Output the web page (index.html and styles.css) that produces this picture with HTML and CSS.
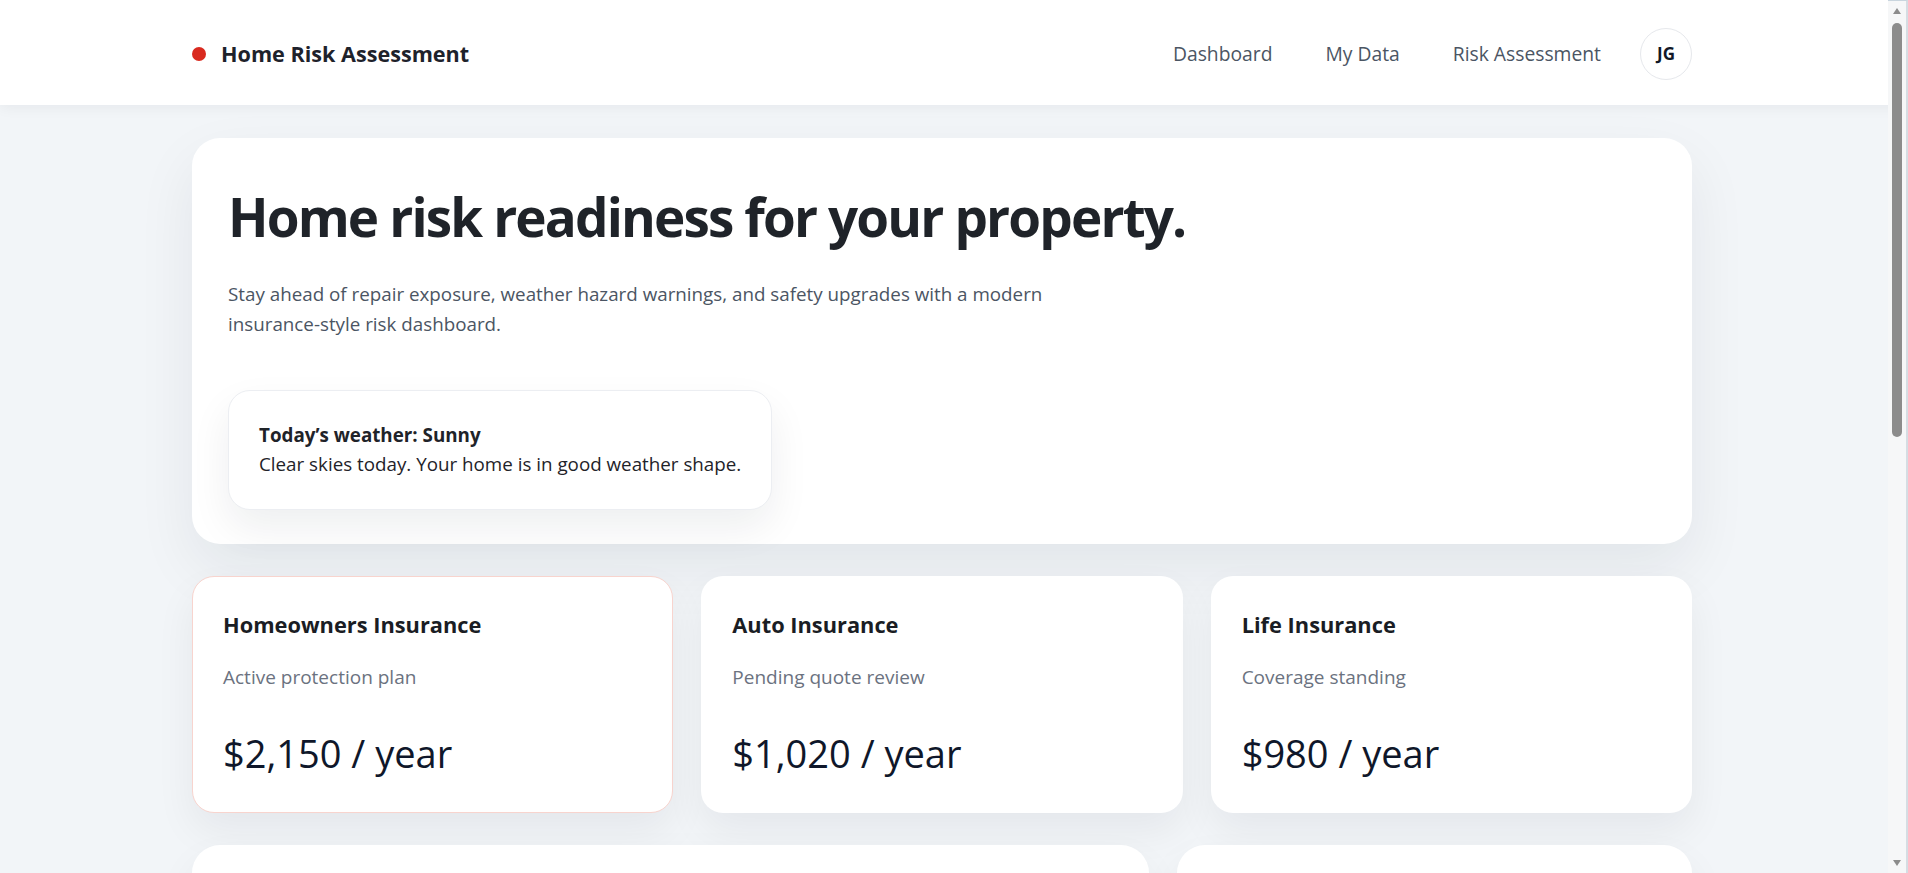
FILE: index.html
```html
<!DOCTYPE html>
<html lang="en">
<head>
<meta charset="utf-8">
<title>Home Risk Assessment</title>
<link rel="stylesheet" href="styles.css">
</head>
<body>
<header class="topbar">
  <div class="topbar-inner">
    <div class="brand"><span class="brand-dot"></span><span class="brand-name">Home Risk Assessment</span></div>
    <nav class="nav">
      <a class="nav-link" href="#">Dashboard</a>
      <a class="nav-link" href="#">My Data</a>
      <a class="nav-link" href="#">Risk Assessment</a>
      <span class="avatar">JG</span>
    </nav>
  </div>
</header>
<div class="page-wrap">
<main class="page">
  <section class="hero">
    <h1 class="hero-title">Home risk readiness for your property.</h1>
    <p class="hero-text">Stay ahead of repair exposure, weather hazard warnings, and safety upgrades with a modern insurance-style risk dashboard.</p>
    <div class="weather">
      <div class="weather-title">Today’s weather: Sunny</div>
      <div class="weather-text">Clear skies today. Your home is in good weather shape.</div>
    </div>
  </section>
  <section class="policies">
    <article class="policy policy-active">
      <h2 class="policy-title">Homeowners Insurance</h2>
      <p class="policy-status">Active protection plan</p>
      <p class="policy-price">$2,150 / year</p>
    </article>
    <article class="policy">
      <h2 class="policy-title">Auto Insurance</h2>
      <p class="policy-status">Pending quote review</p>
      <p class="policy-price">$1,020 / year</p>
    </article>
    <article class="policy">
      <h2 class="policy-title">Life Insurance</h2>
      <p class="policy-status">Coverage standing</p>
      <p class="policy-price">$980 / year</p>
    </article>
  </section>
  <section class="details">
    <article class="panel"></article>
    <article class="panel"></article>
  </section>
</main>
</div>
<div class="scrollbar" aria-hidden="true">
  <span class="scroll-arrow scroll-up"></span>
  <span class="scroll-thumb"></span>
  <span class="scroll-arrow scroll-down"></span>
</div>
</body>
</html>
```

FILE: styles.css
```css
* { box-sizing: border-box; }

body {
  margin: 0;
  background: #f2f5f8;
  font-family: "Open Sans", "Noto Sans", sans-serif;
  color: #1f2329;
}

.topbar {
  background: #ffffff;
  height: 105px;
  padding-right: 24px;
  box-shadow: 0 2px 14px rgba(15, 23, 42, 0.06);
}

.topbar-inner {
  max-width: 1500px;
  height: 100%;
  margin: 0 auto;
  display: flex;
  align-items: center;
  justify-content: space-between;
}

.brand {
  display: flex;
  align-items: center;
  gap: 15px;
  padding-top: 2px;
}

.brand-dot {
  width: 14px;
  height: 14px;
  border-radius: 50%;
  background: #d92a1f;
}

.brand-name {
  font-size: 21.6px;
  font-weight: 700;
  color: #1e222b;
}

.nav {
  display: flex;
  align-items: center;
  gap: 25px;
  padding-top: 2px;
}

.nav-link {
  padding: 0 14px;
  font-size: 19.3px;
  color: #4b5563;
  text-decoration: none;
}

.avatar {
  width: 52px;
  height: 52px;
  border: 1px solid #e6e8ec;
  border-radius: 50%;
  display: flex;
  align-items: center;
  justify-content: center;
  font-size: 17px;
  font-weight: 700;
  color: #111827;
}

.page-wrap {
  padding-right: 24px;
}

.page {
  max-width: 1500px;
  margin: 33px auto 40px;
  display: flex;
  flex-direction: column;
  gap: 32px;
}

.hero {
  background: #ffffff;
  border-radius: 28px;
  padding: 50px 36px 34px;
  box-shadow: 0 24px 60px rgba(15, 23, 42, 0.07);
}

.hero-title {
  margin: 0;
  font-size: 53px;
  line-height: 1.1;
  font-weight: 700;
  letter-spacing: -0.035em;
  color: #1f2329;
}

.hero-text {
  margin: 33px 0 0;
  max-width: 880px;
  font-size: 18.8px;
  line-height: 30px;
  color: #4b5563;
}

.weather {
  width: fit-content;
  margin-top: 51px;
  padding: 30px;
  border: 1px solid #eceef2;
  border-radius: 22px;
  background: #ffffff;
  box-shadow: 0 18px 40px rgba(15, 23, 42, 0.07);
  font-size: 18.8px;
  line-height: 29px;
  color: #1f2329;
}

.weather-title {
  font-weight: 700;
}

.policies {
  display: grid;
  grid-template-columns: repeat(3, 1fr);
  gap: 28px;
}

.policy {
  background: #ffffff;
  border: 1px solid transparent;
  border-radius: 22px;
  padding: 34px 30px 37px;
  box-shadow: 0 18px 40px rgba(15, 23, 42, 0.06);
}

.policy-active {
  border-color: #f8d4ce;
}

.policy-title {
  margin: 0;
  font-size: 21.8px;
  line-height: 28px;
  font-weight: 700;
  color: #1a1d24;
}

.policy-status {
  margin: 25px 0 0;
  font-size: 19px;
  line-height: 27px;
  color: #6b7280;
}

.policy-price {
  margin: 40px 0 0;
  font-size: 38px;
  line-height: 44px;
  color: #0f172a;
}

.details {
  display: grid;
  grid-template-columns: 13fr 7fr;
  gap: 28px;
}

.panel {
  background: #ffffff;
  border-radius: 28px;
  min-height: 380px;
  box-shadow: 0 18px 40px rgba(15, 23, 42, 0.06);
}

/* Browser scrollbar as seen in the reference window */
.scrollbar {
  position: fixed;
  top: 0;
  right: 0;
  width: 20px;
  height: 100vh;
  background: #f6f7f8;
  border-right: 2px solid #d5dde3;
  border-top: 1px solid #c9d5de;
}

.scroll-thumb {
  position: absolute;
  top: 22px;
  left: 4px;
  width: 10px;
  height: 414px;
  border-radius: 5px;
  background: #8c8c8c;
}

.scroll-arrow {
  position: absolute;
  left: 5px;
  width: 0;
  height: 0;
  border-left: 4px solid transparent;
  border-right: 4px solid transparent;
}

.scroll-up {
  top: 7px;
  border-bottom: 6px solid #8c8c8c;
}

.scroll-down {
  bottom: 7px;
  border-top: 6px solid #8c8c8c;
}
```
